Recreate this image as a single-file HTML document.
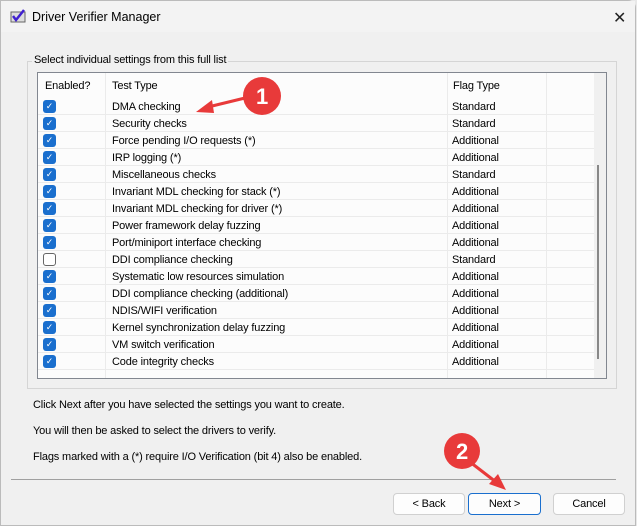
<!DOCTYPE html>
<html><head><meta charset="utf-8"><style>
*{box-sizing:border-box;margin:0;padding:0}
body{width:637px;height:526px;background:#e8e8e8;font-family:"Liberation Sans",sans-serif;font-size:11px;letter-spacing:-0.15px;color:#000;position:relative;overflow:hidden}
.win{position:absolute;left:0;top:0;width:636px;height:526px;background:#f0f0f0;border:1px solid #bbb;border-radius:0 8px 0 0}
.title{position:absolute;left:0;top:0;width:100%;height:31px;background:#f3f3f3}
.title span{position:absolute;left:31px;top:9px;font-size:12.5px;letter-spacing:0}
.x{position:absolute;left:612px;top:7px;font-size:16px;color:#222}
.grp{position:absolute;left:26px;top:60px;width:590px;height:328px;border:1px solid #d5d5d5}
.grplbl{position:absolute;left:31px;top:53px;background:#f0f0f0;padding:0 2px}
.lb{position:absolute;left:36px;top:71px;width:570px;height:307px;background:#fcfcfc;border:1px solid #828790;overflow:hidden}
.row{position:absolute;left:0;height:17px;width:556px;border-bottom:1px solid #ebebeb}
.c{position:absolute;top:0;height:100%;border-right:1px solid #ebebeb;line-height:18px}
.cb{position:absolute;left:5px;top:2px;width:13px;height:13px;border-radius:3px;background:#1a6fce;color:#fff;font-size:9px;line-height:13px;text-align:center}
.cb.off{background:#fff;border:1px solid #666}
.sb{position:absolute;left:556px;top:0;width:13px;height:305px;background:#f0f0f0}
.thumb{position:absolute;left:559px;top:92px;width:2px;height:194px;background:#888}
.t{position:absolute;left:32px}
.sep{position:absolute;left:10px;top:478px;width:605px;height:1px;background:#a0a0a0}
.btn{position:absolute;top:492px;height:22px;border:1px solid #d0d0d0;border-radius:4px;background:#fdfdfd;text-align:center;line-height:20px}
</style></head><body>
<div class="win">
<div class="title">
<svg style="position:absolute;left:9px;top:8px" width="16" height="14"><rect x="1" y="3" width="14" height="10" fill="#ddd" stroke="#666"/><path d="M3 7 L6 11 L14 1" stroke="#4020d0" stroke-width="2.5" fill="none"/></svg>
<span>Driver Verifier Manager</span><div class="x">✕</div></div>
<div class="grp"></div>
<div class="grplbl">Select individual settings from this full list</div>
<div class="lb">
<div class="row" style="top:0;height:26px;background:#fcfcfc;border-bottom:none">
<div class="c" style="left:0;width:68px;line-height:26px;padding-left:7px">Enabled?</div>
<div class="c" style="left:68px;width:342px;line-height:26px;padding-left:6px">Test Type</div>
<div class="c" style="left:410px;width:99px;line-height:26px;padding-left:5px">Flag Type</div>
</div>
<div id="rows"></div>
<div class="sb"></div><div class="thumb"></div>
</div>
<div class="t" style="top:398px">Click Next after you have selected the settings you want to create.</div>
<div class="t" style="top:424px">You will then be asked to select the drivers to verify.</div>
<div class="t" style="top:450px">Flags marked with a (*) require I/O Verification (bit 4) also be enabled.</div>
<div class="sep"></div>
<div class="btn" style="left:392px;width:72px">&lt; Back</div>
<div class="btn" style="left:467px;width:73px;border-color:#1a6fce">Next &gt;</div>
<div class="btn" style="left:552px;width:72px">Cancel</div>
</div>
<svg style="position:absolute;left:0;top:0" width="637" height="526">
<path d="M245 98 L208 107" stroke="#e83a3a" stroke-width="3"/>
<polygon points="196,112 212,100 214,113" fill="#e83a3a"/>
<circle cx="262" cy="96" r="19" fill="#e83a3a"/>
<text x="262" y="104" font-family="Liberation Sans" font-weight="bold" font-size="22" fill="#fff" text-anchor="middle">1</text>
<path d="M470 462 L496 482" stroke="#e83a3a" stroke-width="3"/>
<polygon points="506,490 489,484 498,474" fill="#e83a3a"/>
<circle cx="462" cy="451" r="18" fill="#e83a3a"/>
<text x="462" y="459" font-family="Liberation Sans" font-weight="bold" font-size="22" fill="#fff" text-anchor="middle">2</text>
</svg>
<script>
var d=[["DMA checking","Standard"],["Security checks","Standard"],["Force pending I/O requests (*)","Additional"],["IRP logging (*)","Additional"],["Miscellaneous checks","Standard"],["Invariant MDL checking for stack (*)","Additional"],["Invariant MDL checking for driver (*)","Additional"],["Power framework delay fuzzing","Additional"],["Port/miniport interface checking","Additional"],["DDI compliance checking","Standard",1],["Systematic low resources simulation","Additional"],["DDI compliance checking (additional)","Additional"],["NDIS/WIFI verification","Additional"],["Kernel synchronization delay fuzzing","Additional"],["VM switch verification","Additional"],["Code integrity checks","Additional"],["","",2]];
var h="";d.forEach(function(r,i){var t=25+i*17;h+='<div class="row" style="top:'+t+'px"><div class="c" style="left:0;width:68px">'+(r[2]==2?'':'<div class="cb'+(r[2]?' off':'')+'">'+(r[2]?'':'✓')+'</div>')+'</div><div class="c" style="left:68px;width:342px;padding-left:6px">'+r[0]+'</div><div class="c" style="left:410px;width:99px;padding-left:4px">'+r[1]+'</div></div>'});
document.getElementById("rows").innerHTML=h;
</script>
</body></html>
